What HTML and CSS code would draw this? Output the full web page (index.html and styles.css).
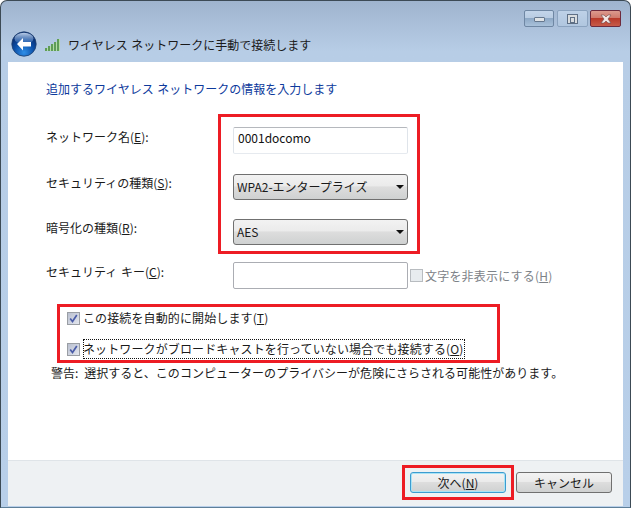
FILE: index.html
```html
<!DOCTYPE html>
<html lang="ja">
<head>
<meta charset="utf-8">
<title>ワイヤレス ネットワークに手動で接続します</title>
<link rel="stylesheet" href="styles.css">
</head>
<body>
<div class="window">
  <div class="caption">
    <div class="controls">
      <span class="ctl ctl-min"><i class="glyph-min"></i></span>
      <span class="ctl ctl-max"><i class="glyph-max"></i></span>
      <span class="ctl ctl-close">
        <svg width="14" height="10" viewBox="0 0 14 10"><path d="M2 1h3l2 2 2-2h3L9 5l3 4H9L7 7 5 9H2l3-4z" fill="#f2e6e4" stroke="#6d4a4a" stroke-width=".6"/></svg>
      </span>
    </div>
    <div class="nav">
      <svg class="back" width="26" height="26" viewBox="0 0 26 26">
        <defs>
          <radialGradient id="orb" cx="50%" cy="85%" r="70%"><stop offset="0" stop-color="#2f8fe8"/><stop offset=".6" stop-color="#0b4ea6"/><stop offset="1" stop-color="#0a2f73"/></radialGradient>
          <linearGradient id="shine" x1="0" y1="0" x2="0" y2="1"><stop offset="0" stop-color="#cfe0f5" stop-opacity=".9"/><stop offset="1" stop-color="#5d95d8" stop-opacity=".25"/></linearGradient>
        </defs>
        <circle cx="13" cy="13" r="12.2" fill="url(#orb)" stroke="#20406f" stroke-width=".8"/>
        <ellipse cx="13" cy="7.5" rx="9.5" ry="5.8" fill="url(#shine)"/>
        <path d="M6 13l6-6v4h8v4.5h-8v4z" fill="#fff"/>
      </svg>
      <svg class="signal" width="16" height="14" viewBox="0 0 16 14">
        <g fill="#5f9c58">
          <rect x="0" y="10" width="2" height="3"/><rect x="3" y="8" width="2" height="5"/><rect x="6" y="6" width="2" height="7"/><rect x="9" y="4" width="2" height="9"/><rect x="12" y="1" width="2" height="12"/>
        </g>
        <g fill="#b5dba8"><rect x="2" y="10" width="1" height="3"/><rect x="5" y="8" width="1" height="5"/><rect x="8" y="6" width="1" height="7"/><rect x="11" y="4" width="1" height="9"/><rect x="14" y="1" width="1" height="12"/></g>
      </svg>
      <span class="title">ワイヤレス ネットワークに手動で接続します</span>
    </div>
  </div>
  <div class="panel">
    <div class="content">
      <p class="heading">追加するワイヤレス ネットワークの情報を入力します</p>
      <div class="form">
        <div class="row row-name">
          <label class="lbl">ネットワーク名(<u>E</u>):</label>
          <div class="input filled">0001docomo</div>
        </div>
        <div class="row row-sec">
          <label class="lbl">セキュリティの種類(<u>S</u>):</label>
          <div class="select"><span>WPA2-エンタープライズ</span><i class="caret"></i></div>
        </div>
        <div class="row row-enc">
          <label class="lbl">暗号化の種類(<u>R</u>):</label>
          <div class="select"><span>AES</span><i class="caret"></i></div>
        </div>
        <div class="row row-key">
          <label class="lbl">セキュリティ キー(<u>C</u>):</label>
          <div class="input empty"></div>
          <span class="box box-off"></span>
          <span class="hide-label">文字を非表示にする(<u>H</u>)</span>
        </div>
      </div>
      <div class="check check-a">
        <span class="box box-on"><svg width="9" height="9" viewBox="0 0 9 9"><path d="M1.2 4.5l2.3 3L7.8 1" fill="none" stroke="#4a5ca8" stroke-width="1.7"/></svg></span>
        <span class="check-text">この接続を自動的に開始します(<u>T</u>)</span>
      </div>
      <div class="check check-b">
        <span class="box box-on"><svg width="9" height="9" viewBox="0 0 9 9"><path d="M1.2 4.5l2.3 3L7.8 1" fill="none" stroke="#4a5ca8" stroke-width="1.7"/></svg></span>
        <span class="check-text focus">ネットワークがブロードキャストを行っていない場合でも接続する(<u>O</u>)</span>
      </div>
      <p class="warn">警告: 選択すると、このコンピューターのプライバシーが危険にさらされる可能性があります。</p>
    </div>
    <div class="footer">
      <span class="btn btn-default">次へ(<u>N</u>)</span>
      <span class="btn">キャンセル</span>
    </div>
  </div>
</div>
<div class="mark mark-fields"></div>
<div class="mark mark-checks"></div>
<div class="mark mark-next"></div>
</body>
</html>
```
FILE: styles.css
```css
* { box-sizing: border-box; }
html, body { margin: 0; padding: 0; }
body {
  width: 631px;
  height: 509px;
  position: relative;
  overflow: hidden;
  background: #fff;
  font: 12px/16px "Noto Sans CJK JP", "Noto Sans", sans-serif;
  color: #1a1a1a;
}
u { text-underline-offset: 1px; }
.window {
  width: 631px;
  height: 508px;
  border: 1px solid #3c4a55;
  border-bottom-color: #5e7f99;
  border-radius: 7px 7px 0 0;
  background: linear-gradient(#9fb4ce 0, #b7cde6 50px, #b8cfe9 100%);
  display: flex;
  flex-direction: column;
  padding: 0 7px 1px;
}
.caption { height: 61px; flex: none; }
.controls {
  display: flex;
  justify-content: flex-end;
  height: 27px;
  padding: 9px 2px 0 0;
}
.ctl {
  height: 17px;
  border: 1px solid #6f87a3;
  border-radius: 2px;
  display: flex;
  align-items: center;
  justify-content: center;
  background: linear-gradient(#c3d5ea 0, #b9cce2 45%, #8ea9c6 50%, #a9c1da 100%);
}
.ctl-min { width: 30px; margin-right: 3px; }
.ctl-max { width: 31px; margin-right: 2px; border-color: #8ba3bf; background: linear-gradient(#bed1e7, #b0c6df); }
.ctl-close { width: 31px; border-color: #6e2a3c; background: linear-gradient(#dc9a8e 0, #d07a6c 45%, #b93a2a 50%, #c75b49 100%); }
.glyph-min { width: 11px; height: 5px; background: #dfe3e6; border: 1px solid #66788e; border-radius: 1px; margin-top: 2px; }
.glyph-max { width: 11px; height: 10px; background: #d8dcdf; border: 1px solid #5e6f85; display: flex; }
.glyph-max::before { content: ""; width: 5px; height: 4px; margin: 2px; border: 1px solid #5e6f85; }
.nav {
  display: flex;
  align-items: center;
  height: 34px;
  padding: 4px 0 4px 3px;
}
.back { flex: none; margin-top: -2px; }
.signal { flex: none; margin-left: 8px; }
.title { margin-left: 7px; word-spacing: 1px; }
.panel {
  flex: 1;
  background: #fff;
  display: flex;
  flex-direction: column;
  min-height: 0;
}
.content { flex: 1; padding: 19px 0 0 38px; }
.heading { margin: 0; color: #0d3a9c; word-spacing: 1px; }
.form { margin-top: 30px; }
.row { display: flex; align-items: center; }
.row-name { height: 27px; }
.row-sec { height: 26px; margin-top: 20px; }
.row-enc { height: 26px; margin-top: 19px; }
.row-key { height: 27px; margin-top: 17px; }
.lbl { width: 187px; flex: none; word-spacing: 1px; position: relative; top: -4px; }
.input {
  width: 175px;
  height: 27px;
  border: 1px solid #abadb3;
  border-radius: 2px;
  padding: 2px 4px;
  color: #111;
}
.filled { border-color: #b5b8bd #dfe4ea #e6eaef #dfe4ea; }
.empty { margin-right: 2px; }
.select {
  width: 175px;
  height: 26px;
  border: 1px solid #707070;
  border-radius: 3px;
  background: linear-gradient(#f2f2f2 0, #ebebeb 45%, #dddddd 50%, #cfd1d1 100%);
  padding: 0 3px;
  display: flex;
  align-items: center;
  justify-content: space-between;
}
.caret {
  width: 0; height: 0;
  border-left: 4px solid transparent;
  border-right: 4px solid transparent;
  border-top: 4px solid #111;
}
.box {
  width: 13px;
  height: 13px;
  flex: none;
  border: 1px solid #9a9ea4;
  display: inline-flex;
  align-items: center;
  justify-content: center;
}
.box-off { border-color: #b8bcc0; background: #e8ecef; margin-right: 2px; }
.box-on { background: linear-gradient(135deg, #b9bfcf, #e4e7ef); }
.hide-label { color: #7d8288; word-spacing: 1px; letter-spacing: .2px; }
.check {
  display: flex;
  align-items: center;
  gap: 3px;
  margin-left: 21px;
}
.check-text { letter-spacing: .12px; }
.check-a { height: 18px; margin-top: 20px; }
.check-b { height: 20px; margin-top: 12px; }
.focus { outline: 1px dotted #111; outline-offset: -1px; height: 20px; line-height: 20px; white-space: nowrap; padding-right: 2px; }
.warn { margin: 6px 0 0 5px; white-space: nowrap; word-spacing: 3px; letter-spacing: .03px; }
.footer {
  height: 46px;
  flex: none;
  background: #eef1f3;
  border-top: 1px solid #dfe4e8;
  display: flex;
  justify-content: flex-end;
  align-items: flex-start;
  gap: 10px;
  padding: 11px 11px 0 0;
}
.btn {
  width: 96px;
  height: 21px;
  border: 1px solid #707070;
  border-radius: 3px;
  background: linear-gradient(#f3f3f3 0, #ebebeb 45%, #dddddd 50%, #cfd1d1 100%);
  display: flex;
  align-items: center;
  justify-content: center;
}
.btn-default { border-color: #3c9cd0; box-shadow: inset 0 0 0 1px #a9e3f5; }
.mark { position: absolute; border: 3px solid #ed1c24; }
.mark-fields { left: 218px; top: 114px; width: 202px; height: 140px; }
.mark-checks { left: 57px; top: 304px; width: 443px; height: 59px; }
.mark-next { left: 402px; top: 465px; width: 112px; height: 35px; }
```
